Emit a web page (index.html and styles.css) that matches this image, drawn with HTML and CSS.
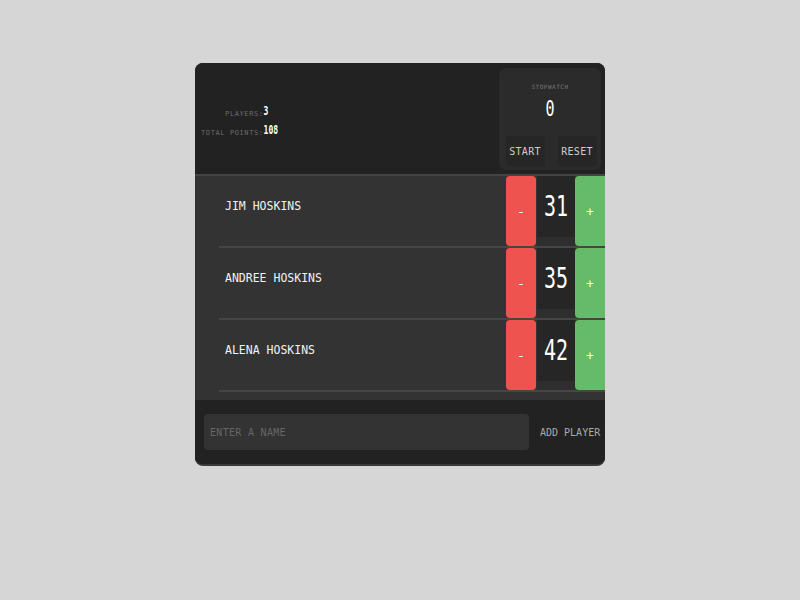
FILE: index.html
```html
<!DOCTYPE html>
<html>
<head>
<meta charset="utf-8">
<link rel="stylesheet" href="styles.css">
</head>
<body>
<div class="card">
  <header class="header">
    <div class="stats">
      <span class="stat-label">PLAYERS:</span><span class="stat-value">3</span>
      <span class="stat-label">TOTAL POINTS:</span><span class="stat-value">108</span>
    </div>
    <div class="stopwatch">
      <div class="sw-title">STOPWATCH</div>
      <div class="sw-time"><span class="tall">0</span></div>
      <div class="sw-buttons">
        <button class="sw-btn">START</button>
        <button class="sw-btn">RESET</button>
      </div>
    </div>
  </header>
  <div class="players">
    <div class="player">
      <div class="name">JIM HOSKINS</div>
      <div class="counter">
        <button class="btn minus">-</button>
        <div class="score"><span class="tall">31</span></div>
        <button class="btn plus">+</button>
      </div>
    </div>
    <div class="player">
      <div class="name">ANDREE HOSKINS</div>
      <div class="counter">
        <button class="btn minus">-</button>
        <div class="score"><span class="tall">35</span></div>
        <button class="btn plus">+</button>
      </div>
    </div>
    <div class="player">
      <div class="name">ALENA HOSKINS</div>
      <div class="counter">
        <button class="btn minus">-</button>
        <div class="score"><span class="tall">42</span></div>
        <button class="btn plus">+</button>
      </div>
    </div>
  </div>
  <form class="add-form">
    <input class="name-input" type="text" placeholder="ENTER A NAME">
    <button class="add-btn" type="button">ADD PLAYER</button>
  </form>
</div>
</body>
</html>
```

FILE: styles.css
```css
* { box-sizing: border-box; }
body {
  margin: 0;
  background: #d6d6d6;
  font-family: "DejaVu Sans Mono", "Liberation Mono", monospace;
}
.card {
  width: 410px;
  margin: 63px auto 0;
  background: #222;
  border-radius: 8px;
  overflow: hidden;
  border-bottom: 2px solid #3a3a3a;
}
.header {
  height: 113px;
  display: flex;
  justify-content: space-between;
  align-items: flex-start;
  border-bottom: 2px solid #444;
  background: #222;
}
.stats {
  display: grid;
  grid-template-columns: auto auto;
  align-items: baseline;
  row-gap: 10px;
  padding: 46px 0 0 6px;
}
.stat-label {
  text-align: right;
  font-size: 7px;
  letter-spacing: 0.6px;
  color: #6c6c6c;
}
.stat-value {
  font-size: 8px;
  color: #fff;
  display: inline-block;
  transform: scaleY(1.6);
  transform-origin: left bottom;
  font-weight: bold;
}
.stopwatch {
  width: 102px;
  height: 102px;
  margin: 5px 4px 0 0;
  background: #2b2b2b;
  border-radius: 7px;
  display: flex;
  flex-direction: column;
  align-items: center;
  padding-top: 15px;
}
.sw-title {
  font-size: 6px;
  letter-spacing: 0.5px;
  color: #777;
  line-height: 8px;
}
.sw-time {
  margin-top: 6px;
  height: 24px;
  font-size: 15px;
  color: #fff;
  line-height: 24px;
}
.tall {
  display: inline-block;
  transform: scaleY(1.45);
}
.sw-buttons {
  margin-top: 15px;
  display: flex;
  gap: 13px;
  padding: 0 2px 0 4px;
}
.sw-btn {
  width: 39px;
  height: 30px;
  background: #262626;
  border: none;
  border-radius: 3px;
  color: #ccc;
  font-family: inherit;
  font-size: 10px;
  letter-spacing: 0.3px;
  padding: 0;
}
.players {
  background: #333;
  padding-bottom: 8px;
}
.player {
  margin-left: 24px;
  height: 72px;
  border-bottom: 2px solid #464646;
  display: flex;
  justify-content: space-between;
}
.name {
  padding: 23px 0 0 6px;
  font-size: 11.5px;
  color: #f2f2f2;
}
.counter {
  display: flex;
  height: 70px;
}
.btn {
  width: 30px;
  height: 70px;
  border: none;
  border-radius: 4px;
  color: #fff;
  font-family: inherit;
  font-size: 13px;
  padding: 0;
}
.minus { background: #ef5350; }
.plus { background: #66bb6a; border-radius: 4px 0 0 4px; }
.score {
  width: 38px;
  margin-left: 1px;
  height: 70px;
  background: linear-gradient(#262626 0, #262626 61px, #2e2e2e 61px);
  color: #fff;
  font-size: 20px;
  text-align: center;
  padding-top: 18px;
  line-height: 24px;
}
.add-form {
  margin: 0;
  display: flex;
  align-items: center;
  padding: 14px 0 14px 9px;
  background: #222;
}
.name-input {
  width: 325px;
  height: 36px;
  background: #333;
  border: none;
  border-radius: 4px;
  padding: 0 6px;
  font-family: inherit;
  font-size: 10px;
  color: #ddd;
  outline: none;
}
.name-input::placeholder {
  color: #666;
  letter-spacing: 0.3px;
}
.add-btn {
  flex: 1;
  background: none;
  border: none;
  color: #aaa;
  font-family: inherit;
  font-size: 10px;
  letter-spacing: 0;
  padding: 0 3px 0 11px;
  text-align: left;
}
```
